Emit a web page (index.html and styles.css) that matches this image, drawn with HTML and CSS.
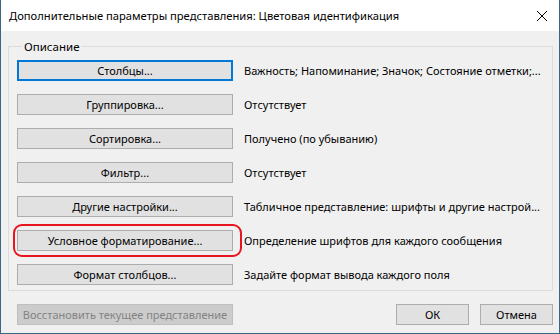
FILE: index.html
```html
<!DOCTYPE html>
<html lang="ru">
<head>
  <meta charset="UTF-8" />
  <title>Дополнительные параметры представления</title>
  <link rel="stylesheet" href="styles.css">
</head>
<body>
  <div class="window">
    <div class="title-bar">
      <span class="title">Дополнительные параметры представления: Цветовая идентификация</span>
      <svg class="close" width="12" height="12" viewBox="0 0 12 12">
        <path d="M1 1 L11 11 M11 1 L1 11" stroke="#000" stroke-width="1" fill="none"/>
      </svg>
    </div>

    <div class="content">
      <fieldset class="group">
        <legend>Описание</legend>

        <div class="row">
          <button class="btn focused">Столбцы...</button>
          <span class="desc">Важность; Напоминание; Значок; Состояние отметки;...</span>
        </div>
        <div class="row">
          <button class="btn">Группировка...</button>
          <span class="desc">Отсутствует</span>
        </div>
        <div class="row">
          <button class="btn">Сортировка...</button>
          <span class="desc">Получено (по убыванию)</span>
        </div>
        <div class="row">
          <button class="btn">Фильтр...</button>
          <span class="desc">Отсутствует</span>
        </div>
        <div class="row">
          <button class="btn">Другие настройки...</button>
          <span class="desc">Табличное представление: шрифты и другие настрой...</span>
        </div>
        <div class="row">
          <button class="btn marked">Условное форматирование...</button>
          <span class="desc">Определение шрифтов для каждого сообщения</span>
        </div>
        <div class="row">
          <button class="btn">Формат столбцов...</button>
          <span class="desc">Задайте формат вывода каждого поля</span>
        </div>
      </fieldset>

      <div class="footer">
        <button class="btn" disabled>Восстановить текущее представление</button>
        <div class="footer-right">
          <button class="btn small">ОК</button>
          <button class="btn small">Отмена</button>
        </div>
      </div>
    </div>
  </div>
</body>
</html>
```

FILE: styles.css
```css
* {
  box-sizing: border-box;
}

body {
  margin: 0;
  font-family: 'Noto Sans', 'Open Sans', sans-serif;
  font-size: 11px;
  color: #000;
}

.window {
  width: 560px;
  height: 334px;
  background-color: #f0f0f0;
  border: 1px solid #3d6683;
  border-top: none;
  display: flex;
  flex-direction: column;
}

.title-bar {
  height: 31px;
  background-color: #fff;
  display: flex;
  align-items: center;
  justify-content: space-between;
  padding: 0 10px 0 8px;
}

.title {
  font-size: 11.2px;
}

.close {
  margin-right: 1px;
}

.content {
  padding: 8px 6px 0 7px;
}

.group {
  margin: 0;
  padding: 6px 8px 5px 8px;
  border: 1px solid #dcdcdc;
  min-width: 0;
  display: flex;
  flex-direction: column;
  gap: 13px;
}

.group legend {
  padding: 0 2px;
  margin-left: 5px;
  font-size: 11.5px;
}

.row {
  display: flex;
  align-items: center;
  gap: 11px;
}

.btn {
  flex-shrink: 0;
  width: 216px;
  height: 21px;
  padding: 0;
  background-color: #e1e1e1;
  border: 1px solid #adadad;
  font-family: inherit;
  font-size: 11px;
  color: #000;
  white-space: nowrap;
}

.btn.focused {
  border: 2px solid #0078d7;
}

.btn.marked {
  position: relative;
}

.btn.marked::after {
  content: "";
  position: absolute;
  left: -5px;
  right: -10px;
  top: -7px;
  bottom: -7px;
  border: 2px solid #e8141e;
  border-radius: 9px;
}

.btn:disabled {
  background-color: #cccccc;
  border-color: #bfbfbf;
  color: #838383;
}

.desc {
  white-space: nowrap;
}

.footer {
  margin-top: 13px;
  padding-left: 9px;
  display: flex;
  justify-content: space-between;
}

.footer-right {
  display: flex;
  gap: 11px;
}

.btn.small {
  width: 73px;
}
```
